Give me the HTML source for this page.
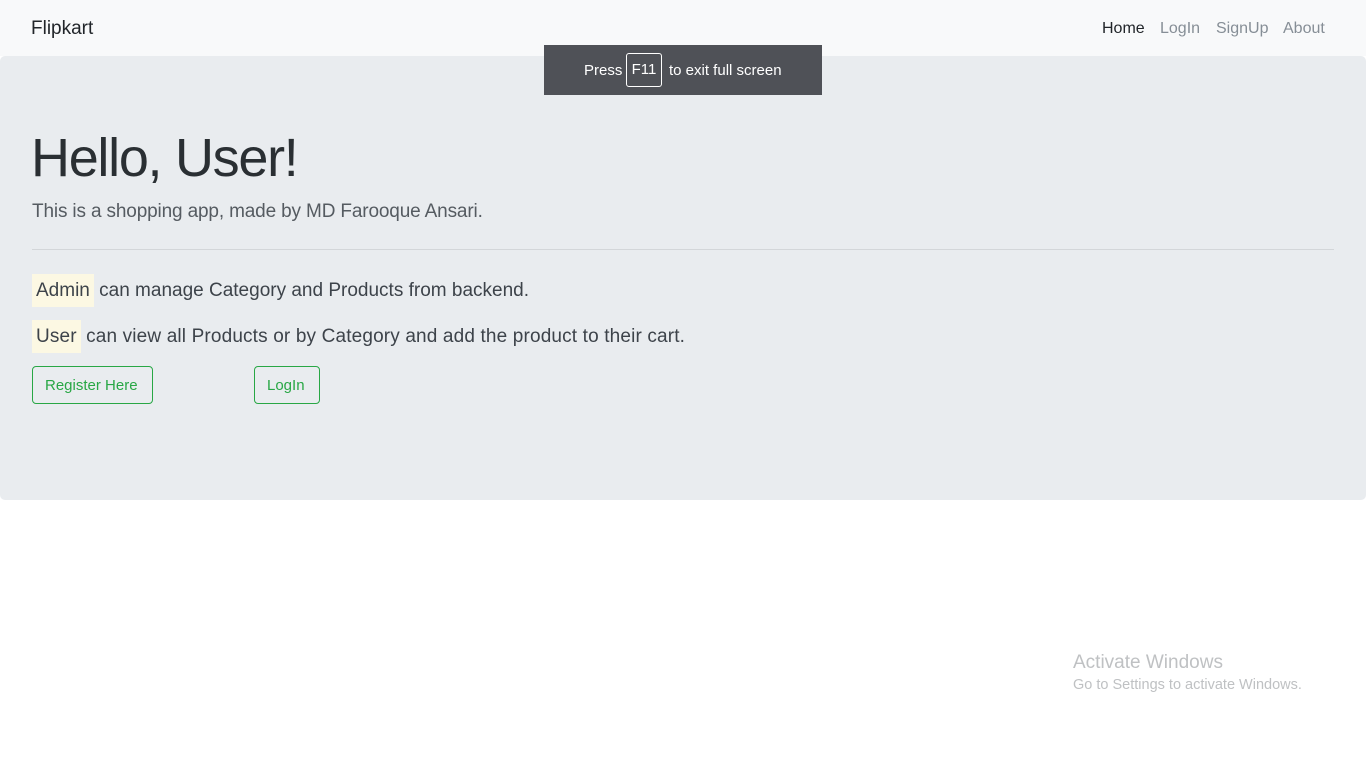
<!DOCTYPE html>
<html><head><meta charset="utf-8"><style>
*{margin:0;padding:0;box-sizing:border-box}
body{width:1366px;height:768px;background:#fff;font-family:"Liberation Sans",sans-serif;position:relative;overflow:hidden;color:#212529}
.a{position:absolute;white-space:nowrap}
nav{position:absolute;left:0;top:0;width:1366px;height:56px;background:#f8f9fa}
.jumbo{position:absolute;left:0;top:56px;width:1366px;height:444px;background:#e9ecef;border-radius:5px}
.mark{background:#fcf8e3;padding:6px 4px}
.btn{position:absolute;border:1px solid #28a745;color:#28a745;border-radius:4px;font-size:15px;height:38px;line-height:37px;padding:0 12px;white-space:nowrap}
.f11{position:absolute;left:544px;top:45px;width:278px;height:50px;background:#4f5157;color:#fff;font-size:15px}
</style></head><body>
<nav>
<div class="a" style="left:31px;top:18px;font-size:19px;color:#212529">Flipkart</div>
<div class="a" style="left:1102px;top:20px;font-size:16px;color:#212529">Home</div>
<div class="a" style="left:1160px;top:20px;font-size:16px;color:#868e96">LogIn</div>
<div class="a" style="left:1216px;top:20px;font-size:16px;color:#868e96">SignUp</div>
<div class="a" style="left:1283px;top:20px;font-size:16px;color:#868e96">About</div>
</nav>
<div class="jumbo">
<div class="a" style="left:31px;top:71px;font-size:54px;color:#2a2f33;letter-spacing:-1.3px">Hello, User!</div>
<div class="a" style="left:32px;top:145px;font-size:19px;color:#555b61;letter-spacing:-0.15px">This is a shopping app, made by MD Farooque Ansari.</div>
<div style="position:absolute;left:32px;top:193px;width:1302px;height:1px;background:#d3d6d9"></div>
<div class="a" style="left:32px;top:224px;font-size:19px;color:#3d434a;letter-spacing:0px"><span class="mark">Admin</span> can manage Category and Products from backend.</div>
<div class="a" style="left:32px;top:270px;font-size:19px;color:#3d434a;letter-spacing:0.15px"><span class="mark">User</span> can view all Products or by Category and add the product to their cart.</div>
<div class="btn" style="left:32px;top:310px;width:121px">Register Here</div>
<div class="btn" style="left:254px;top:310px;width:66px">LogIn</div>
</div>
<div class="f11">
<div class="a" style="left:40px;top:17px">Press</div>
<div class="a" style="left:82px;top:8px;width:36px;height:34px;border:1px solid #fff;border-radius:3px;text-align:center;line-height:32px">F11</div>
<div class="a" style="left:125px;top:17px">to exit full screen</div>
</div>
<div class="a" style="left:1073px;top:652px;font-size:19px;color:#bfc1c3">Activate Windows</div>
<div class="a" style="left:1073px;top:677px;font-size:14.5px;color:#bfc1c3">Go to Settings to activate Windows.</div>
</body></html>
